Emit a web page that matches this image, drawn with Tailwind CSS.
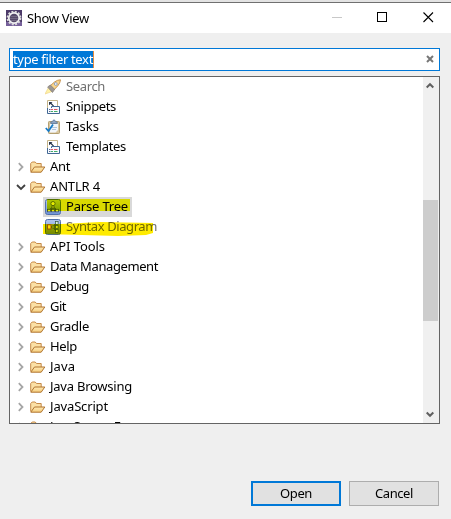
<!DOCTYPE html>
<html lang="en">
<head>
<meta charset="utf-8">
<title>Show View</title>
<script src="https://cdn.jsdelivr.net/npm/@tailwindcss/browser@4"></script>
</head>
<body class="w-[451px] h-[519px] overflow-hidden bg-[#efefef] font-['Noto_Sans',sans-serif] text-[13px] leading-5 text-black">
<svg class="absolute h-0 w-0">
  <defs>
    <linearGradient id="fg" x1="0" y1="0" x2="0" y2="1"><stop offset="0" stop-color="#ffeab5"/><stop offset="1" stop-color="#f5cd7c"/></linearGradient>
    <linearGradient id="bg" x1="0" y1="0" x2="0" y2="1"><stop offset="0" stop-color="#b4c8ee"/><stop offset="1" stop-color="#7094d8"/></linearGradient>
    <symbol id="folder" viewBox="0 0 16 16">
      <path d="M.7 12.5V4.5L2.2 3H5.2L6.5 4.5H11.2V8" fill="#fbe0a5" stroke="#c58a49"/>
      <path d="M.8 13.2L4.5 8H14.8L11.2 13.2Z" fill="url(#fg)" stroke="#b0742f"/>
    </symbol>
    <symbol id="closed" viewBox="0 0 10 10"><path d="M2.8 1.2L6.5 5L2.8 8.8" fill="none" stroke="#a6a6a6" stroke-width="1.8"/></symbol>
    <symbol id="opened" viewBox="0 0 10 10"><path d="M1 3L5 7L9 3" fill="none" stroke="#404040" stroke-width="1.8"/></symbol>
    <symbol id="rocket" viewBox="0 0 16 16">
      <path d="M0 15L3.2 9L7 12.5Z" fill="#fff2a8" stroke="#efd58a" stroke-width=".7"/>
      <path d="M5 7L9.5 3Q12.5 .8 15.5 .8Q15.2 4 12.8 6.8L8.8 11Z" fill="#f9d58c" stroke="#c89450"/>
      <path d="M2.6 8L5.3 6L9.7 10.3L7.5 13.5Z" fill="#9c9793" stroke="#837b75" stroke-width=".7"/>
      <circle cx="10.8" cy="5" r="1.4" fill="#f5f7fb" stroke="#7c91b5" stroke-width=".8"/>
    </symbol>
    <symbol id="snippet" viewBox="0 0 16 16">
      <path d="M2.5 1.5H12.5V8M2.5 1.5V13.5H5" fill="#fff" stroke="#c5b489"/>
      <path d="M4 3H7.5L6.4 4.1L9 6.7L8.2 7.5L5.6 4.9L4 6.3Z" fill="#263449"/>
      <path d="M2.5 9V14.5H14.5V7.5H6.5V9" fill="#f7faff" stroke="#416894"/>
      <path d="M4 10.5H5.5M4 12.5H5.5" stroke="#576d8e"/>
      <path d="M6 10.5H8M9 10.5H12.5" stroke="#e15562"/><path d="M6 12.5H8M9 12.5H12.5" stroke="#42ad68"/>
    </symbol>
    <symbol id="task" viewBox="0 0 16 16">
      <rect x="3.5" y="2.5" width="11" height="12" rx=".8" fill="#d8c69f" stroke="#b5a071"/>
      <path d="M5 5H13V11L10.5 13.5H5Z" fill="#f2f6fb"/>
      <path d="M7 8.5H12M7 10.5H11" stroke="#b3c5dd"/>
      <path d="M5.8 4.5V3L7.4 2.5Q9-.8 10.6 2.5L12.2 3V4.5Z" fill="#8da4c4" stroke="#60789b" stroke-width=".8"/>
      <path d="M.8 9L3.5 12L8 5.5" fill="none" stroke="#187bc7" stroke-width="1.8"/>
    </symbol>
    <symbol id="tree" viewBox="0 0 16 16">
      <rect x=".5" y=".5" width="15" height="15" rx="2" fill="url(#bg)" stroke="#5171ad"/>
      <path d="M8 5V8M8 8L4 11M8 8V11M8 8L12 11" stroke="#33455b"/>
      <g fill="#e9eddc" stroke="#34473e" stroke-width=".7"><circle cx="8" cy="4.6" r="2.1"/><circle cx="8" cy="8" r="1.2"/><rect x="2.6" y="10.3" width="3" height="2.5"/><rect x="6.5" y="10.3" width="3" height="2.5"/><rect x="10.4" y="10.3" width="3" height="2.5"/></g>
    </symbol>
    <symbol id="syntax" viewBox="0 0 16 16">
      <rect x=".5" y=".5" width="15" height="15" rx="2" fill="url(#bg)" stroke="#5171ad"/>
      <path d="M6 8H8L11 4M8 8H11M8 8L11 12" fill="none" stroke="#33455b"/>
      <rect x="2.5" y="5.8" width="3.5" height="4.2" fill="#fff0d5" stroke="#9a4c32" stroke-width=".9"/>
      <g fill="#dcf4dc" stroke="#34573e" stroke-width=".7"><circle cx="8" cy="8" r="1.2"/><rect x="10.5" y="2.6" width="2.6" height="3"/><rect x="10.5" y="6.5" width="2.6" height="3"/><rect x="10.5" y="10.4" width="2.6" height="3"/></g>
    </symbol>
  </defs>
</svg>

<header class="h-[33px] border-t-2 border-[#e3e3e3] bg-white">
  <div class="flex h-[31px] items-center border-t border-[#707070] pl-1.5">
    <svg class="mb-px h-4 w-4 shrink-0" viewBox="0 0 16 16">
      <path fill="#4c3a69" d="M0 0H16V16H0Z"/><path fill="#76609a" d="M0 12H16V16H0Z"/>
      <circle cx="8" cy="8" r="6.5" fill="none" stroke="#d9d9d9" stroke-width="1.8" stroke-dasharray="2 1.4"/>
      <circle cx="8" cy="8" r="5.2" fill="#554969" stroke="#f2f2f2" stroke-width="1.7"/>
      <path d="M4.5 6.5H11.5M4.2 8.5H11.8M5 10.5H11" stroke="#81778f" stroke-width=".7"/>
    </svg>
    <h1 class="ml-[5px] w-[220px]"><span data-width="62">Show View</span></h1>
    <svg class="ml-[85px] h-3 w-[104px]" viewBox="0 0 104 12" fill="none">
      <path d="M0 5.5H10" stroke="#c8c8c8"/><rect x="45.5" y=".5" width="9" height="9" stroke="#000"/><path d="M91.5 .5L101 10M101 .5L91.5 10" stroke="#000" stroke-width="1.1"/>
    </svg>
  </div>
</header>

<main class="px-[9px] pt-[15px]">
  <div class="flex h-[23px] w-[431px] items-center justify-between border border-[#0078d7] bg-white pr-[5px] pl-[3px]">
    <div class="h-[17px] border-r border-[#e78b3c] bg-[#0078d7] leading-[17px] text-white"><span data-width="80">type filter text</span></div>
    <svg class="mb-0.5 h-2 w-2" viewBox="0 0 8 8"><path d="M1 1L7 7M7 1L1 7" stroke="#777" stroke-width="2"/></svg>
  </div>

  <div class="mt-[5px] flex h-[348px] w-[431px] justify-between overflow-hidden border border-[#646464] bg-white">
    <ul id="views" class="relative w-[413px]"></ul>
    <div class="flex w-4 shrink-0 flex-col bg-[#f0f0f0]">
      <svg class="mt-[5px] ml-[3px] h-2 w-2" viewBox="0 0 8 8"><path d="M.7 5.5L4 2.2L7.3 5.5" fill="none" stroke="#606060" stroke-width="2"/></svg>
      <div class="mt-[110px] h-[121px] w-[15px] bg-[#cdcdcd]"></div>
      <svg class="mt-[89px] ml-[3px] h-2 w-2" viewBox="0 0 8 8"><path d="M.7 2.5L4 5.8L7.3 2.5" fill="none" stroke="#606060" stroke-width="2"/></svg>
    </div>
  </div>

  <div class="mt-[57px] flex gap-2 pl-[242px]">
    <button class="flex h-[25px] w-[90px] items-center justify-center border-2 border-[#0078d7] bg-[#e1e1e1]"><span class="pb-0.5" data-width="32">Open</span></button>
    <button class="flex h-[25px] w-[90px] items-center justify-center border border-[#adadad] bg-[#e1e1e1]"><span class="pb-0.5" data-width="38">Cancel</span></button>
  </div>
</main>

<script>
const views = [
  ['rocket', 'Search', 39, 'muted'], ['snippet', 'Snippets', 50], ['task', 'Tasks', 33], ['snippet', 'Templates', 60],
  ['folder', 'Ant', 20], ['folder', 'ANTLR 4', 50, 'opened'],
  ['tree', 'Parse Tree', 62, 'selected'], ['syntax', 'Syntax Diagram', 91, 'muted'],
  ['folder', 'API Tools', 55], ['folder', 'Data Management', 108], ['folder', 'Debug', 39], ['folder', 'Git', 16],
  ['folder', 'Gradle', 39], ['folder', 'Help', 27], ['folder', 'Java', 25], ['folder', 'Java Browsing', 82],
  ['folder', 'JavaScript', 58], ['folder', 'JavaServer Faces', 96]
];
const list = document.getElementById('views');
list.innerHTML = views.map(([icon, name, width, state]) => {
  const folder = icon === 'folder';
  const arrow = folder ? `<svg class="mr-1 h-[10px] w-[10px]"><use href="#${state === 'opened' ? 'opened' : 'closed'}"/></svg>` : '';
  return `<li class="flex h-5 items-center ${folder ? 'pl-[6px]' : 'pl-[33px]'}">
    ${arrow}<div class="flex h-5 items-center ${state === 'selected' ? 'w-[89px] bg-[#d9d9d9]' : ''} ${state === 'muted' ? 'text-[#707070]' : ''}">
    <svg class="${folder ? 'mr-1' : 'ml-[2px] mr-[5px]'} h-4 w-4"><use href="#${icon}"/></svg><span class="pb-0.5" data-width="${width}">${name}</span></div></li>`;
}).join('') + `<svg class="pointer-events-none absolute top-[120px] left-8 h-10 w-[120px] mix-blend-multiply" viewBox="0 0 120 40">
  <path d="M5 2H88V14H5Z" fill="#ffff00"/><path d="M1 27L20 27L58 25L111 26V36L104 38L76 39L40 38L1 37Z" fill="#ffeb00"/></svg>`;

const ruler = document.createElement('canvas').getContext('2d');
ruler.font = '13px "Noto Sans"';
for (const label of document.querySelectorAll('[data-width]')) {
  const text = label.textContent;
  label.style.whiteSpace = 'nowrap';
  label.style.letterSpacing = `${(label.dataset.width - ruler.measureText(text).width) / text.length}px`;
}
</script>
</body>
</html>
